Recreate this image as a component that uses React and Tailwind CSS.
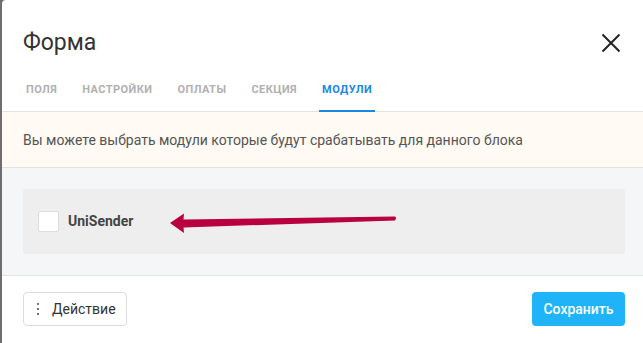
const tabs = ["Поля", "Настройки", "Оплаты", "Секция", "Модули"]

const Arrow = () => (
  <svg width="230" height="24" viewBox="0 0 230 24" className="ml-[37px] mt-[4px]">
    <path
      d="M0 11 L14 1.5 L13.5 7.5 L225 4.5 Q227 5.5 225 8.5 L13.5 15.5 L14 21 Z"
      fill="#b8003e"
      strokeLinejoin="round"
    />
  </svg>
)

const App = () => {
  const active = "Модули"

  return (
    <div className="w-[643px] h-[343px] overflow-hidden bg-[#6e6e6e] font-['Roboto',sans-serif]">
      <div className="ml-[2px] w-[644px] h-[343px] bg-white rounded-tl-[4px] flex flex-col">
        <div className="flex items-center justify-between pt-[28px] pl-[21px] pr-[24px]">
          <h1 className="text-[23px] leading-[30px] font-normal text-[#333]">Форма</h1>
          <svg width="20" height="20" viewBox="0 0 20 20" className="mr-[1px]">
            <path d="M1.5 1.5 L18.5 18.5 M18.5 1.5 L1.5 18.5" stroke="#222" strokeWidth="2" />
          </svg>
        </div>

        <div className="flex gap-[19px] pl-[21px] border-b border-[#e3e3e3]">
          {tabs.map((tab) => (
            <div
              key={tab}
              className={
                tab === active
                  ? "pt-[26px] pb-[14px] px-[3px] -mb-px border-b-2 border-[#1a87e0] text-[11px] leading-[12px] font-bold uppercase tracking-[0.04em] text-[#1a87e0]"
                  : "pt-[26px] pb-[14px] px-[3px] -mb-px border-b-2 border-transparent text-[11px] leading-[12px] font-bold uppercase tracking-[0.04em] text-[#b0b0b0]"
              }
            >
              {tab}
            </div>
          ))}
        </div>

        <div className="h-[56px] flex items-center pl-[21px] pt-[2px] bg-[#fffaf4] border-b border-[#e3e3e3]">
          <p className="text-[14px] text-[#555]">
            Вы можете выбрать модули которые будут срабатывать для данного блока
          </p>
        </div>

        <div className="px-[21px] py-[21px] bg-[#f5f6f8] border-b border-[#e3e3e3]">
          <div className="h-[65px] bg-[#eeeeee] rounded-[2px] flex items-center pl-[15px]">
            <div className="w-[21px] h-[21px] bg-white border border-[#dcdcdc] rounded-[2px]"></div>
            <span className="ml-[9px] text-[14px] font-bold text-[#444]">UniSender</span>
            <Arrow />
          </div>
        </div>

        <div className="flex items-center justify-between px-[21px] py-[16px]">
          <button className="h-[34px] w-[104px] flex items-center pl-[12px] border border-[#dcdcdc] rounded-[4px] bg-white text-[14px] text-[#333]">
            <span className="flex flex-col gap-[3px] ml-[1px] mr-[13px]">
              <span className="w-[2px] h-[2px] rounded-full bg-[#444]"></span>
              <span className="w-[2px] h-[2px] rounded-full bg-[#444]"></span>
              <span className="w-[2px] h-[2px] rounded-full bg-[#444]"></span>
            </span>
            Действие
          </button>
          <button className="h-[34px] w-[93px] rounded-[4px] bg-[#1eb4f7] text-white text-[14px] font-medium">
            Сохранить
          </button>
        </div>
      </div>
    </div>
  )
}

export default App
